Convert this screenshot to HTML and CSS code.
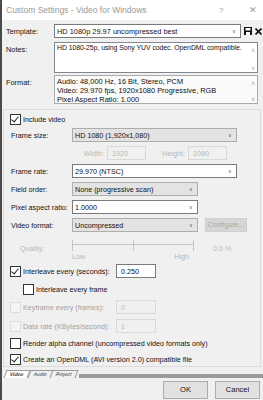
FILE: index.html
```html
<!DOCTYPE html>
<html lang="en">
<head>
  <meta charset="UTF-8" />
  <title>Custom Settings - Video for Windows</title>
  <link rel="stylesheet" href="styles.css">
</head>
<body>

<div class="window">
  <div class="titlebar">
    <span class="title">Custom Settings - Video for Windows</span>
    <span class="tb-help">?</span>
    <span class="tb-close">&#x2715;</span>
  </div>

  <div class="top">
    <div class="row row-template">
      <span class="lbl">Template:</span>
      <div class="combo white wide">
        <span>HD 1080p 29.97 uncompressed best</span>
        <span class="chev">&#x2228;</span>
      </div>
      <svg class="save" width="8" height="8" viewBox="0 0 8 8">
        <rect x="0" y="0" width="8" height="8" fill="#111"/>
        <rect x="1.5" y="1" width="5" height="2.5" fill="#fff"/>
        <rect x="2" y="5" width="4" height="3" fill="#fff"/>
      </svg>
      <svg class="del" width="7" height="7" viewBox="0 0 7 7">
        <path d="M0.5 0.5 L6.5 6.5 M6.5 0.5 L0.5 6.5" stroke="#111" stroke-width="1.6"/>
      </svg>
    </div>

    <div class="row row-notes">
      <span class="lbl">Notes:</span>
      <div class="memo notes">
        <span class="one">HD 1080-25p, using Sony YUV codec. OpenDML compatible.</span>
        <div class="scroll"><span>&#x2227;</span><span>&#x2228;</span></div>
      </div>
    </div>

    <div class="row row-format">
      <span class="lbl">Format:</span>
      <div class="memo format">
        <div class="lines">
          <span>Audio: 48,000 Hz, 16 Bit, Stereo, PCM</span>
          <span>Video: 29.970 fps, 1920x1080 Progressive, RGB</span>
          <span>Pixel Aspect Ratio: 1.000</span>
        </div>
        <div class="scroll"><span>&#x2227;</span><span>&#x2228;</span></div>
      </div>
    </div>
  </div>

  <div class="group">
    <label class="check-row first"><span class="box on"></span>Include video</label>

    <div class="frow">
      <span class="flbl">Frame size:</span>
      <div class="combo gray long"><span>HD 1080 (1,920x1,080)</span><span class="chev">&#x2228;</span></div>
    </div>

    <div class="frow dims">
      <span class="dim-lbl">Width:</span>
      <div class="edit off">1920</div>
      <span class="dim-lbl h">Height:</span>
      <div class="edit off">1080</div>
    </div>

    <div class="frow">
      <span class="flbl">Frame rate:</span>
      <div class="combo white long"><span>29.970 (NTSC)</span><span class="chev">&#x2228;</span></div>
    </div>

    <div class="frow">
      <span class="flbl">Field order:</span>
      <div class="combo gray short"><span>None (progressive scan)</span><span class="chev">&#x2228;</span></div>
    </div>

    <div class="frow">
      <span class="flbl">Pixel aspect ratio:</span>
      <div class="combo white short"><span>1.0000</span><span class="chev">&#x2228;</span></div>
    </div>

    <div class="frow">
      <span class="flbl">Video format:</span>
      <div class="combo gray short"><span>Uncompressed</span><span class="chev">&#x2228;</span></div>
      <div class="btn-config">Configure...</div>
    </div>

    <div class="quality">
      <span class="q-lbl">Quality:</span>
      <div class="slider">
        <div class="track"></div>
        <div class="ticks"><span></span><span></span><span></span></div>
        <div class="ends"><span>Low</span><span>High</span></div>
      </div>
      <span class="q-val">0.0 %</span>
    </div>

    <div class="frow il">
      <label class="check-row"><span class="box on"></span>Interleave every (seconds):</label>
      <div class="edit num">0.250</div>
    </div>

    <label class="check-row indent"><span class="box"></span>Interleave every frame</label>

    <div class="frow il dis">
      <label class="check-row"><span class="box off"></span>Keyframe every (frames):</label>
      <div class="edit num off">0</div>
    </div>

    <div class="frow il dis">
      <label class="check-row"><span class="box off"></span>Data rate (KBytes/second):</label>
      <div class="edit num off">1</div>
    </div>

    <label class="check-row alpha"><span class="box"></span>Render alpha channel (uncompressed video formats only)</label>
    <label class="check-row odml"><span class="box on"></span>Create an OpenDML (AVI version 2.0) compatible file</label>
  </div>

  <div class="tabs">
    <span class="tab active">Video</span>
    <span class="tab">Audio</span>
    <span class="tab">Project</span>
    <div class="tab-rest"></div>
  </div>

  <div class="buttons">
    <div class="btn">OK</div>
    <div class="btn">Cancel</div>
  </div>
</div>

</body>
</html>
```

FILE: styles.css
```css
html, body {
  overflow: hidden;
}
body {
  margin: 0;
  background: #fff;
  font-family: "Liberation Sans", Arial, sans-serif;
}
.window {
  width: 263px;
  height: 400px;
  background: #f0f0f0;
  border-left: 2px solid #4a4a4a;
  box-sizing: border-box;
  overflow: hidden;
  color: #111;
}
.titlebar {
  height: 20px;
  background: #fff;
  display: flex;
  align-items: center;
  font-size: 8.5px;
  color: #999;
  padding-left: 4px;
}
.title {
  flex: 1;
}
.tb-help {
  width: 30px;
  font-size: 8px;
}
.tb-close {
  width: 14px;
  font-size: 9px;
}

.top {
  padding: 4px 0 0 4px;
  font-size: 7.4px;
}
.row {
  display: flex;
}
.lbl {
  width: 48px;
  flex: none;
}
.row-template {
  align-items: center;
  height: 14px;
}
.row-notes {
  margin-top: 4px;
}
.row-notes .lbl,
.row-format .lbl {
  padding-top: 3px;
}
.row-format {
  margin-top: 2px;
}

.combo {
  display: flex;
  align-items: center;
  justify-content: space-between;
  height: 14px;
  box-sizing: border-box;
  padding: 0 4px 0 2px;
  border: 1px solid #aaa;
  white-space: nowrap;
}
.combo.white {
  background: #fff;
  border-color: #7a7a7a;
}
.combo.gray {
  background: #e3e3e3;
  border-color: #adadad;
}
.combo.wide {
  width: 187px;
  flex: none;
}
.chev {
  font-size: 5px;
  color: #555;
}
.save {
  margin-left: 3px;
  flex: none;
}
.del {
  margin-left: 3px;
  flex: none;
}

.memo {
  display: flex;
  justify-content: space-between;
  border: 1px solid #828790;
  box-sizing: border-box;
  width: 204px;
  padding: 1px 0 0 2px;
  white-space: nowrap;
  overflow: hidden;
}
.one {
  font-size: 6.9px;
  letter-spacing: -0.05px;
}
.notes {
  height: 31px;
  background: #fff;
}
.format {
  height: 29px;
  background: #fafafa;
  border-color: #aaa;
}
.lines {
  display: flex;
  flex-direction: column;
  line-height: 9px;
}
.scroll {
  width: 9px;
  flex: none;
  display: flex;
  flex-direction: column;
  justify-content: space-between;
  align-items: center;
  font-size: 6px;
  color: #aaa;
  padding: 2px 0 1px;
}

.group {
  margin: 5px 2px 0 1px;
  height: 258px;
  border: 1px solid #dcdcdc;
  box-sizing: border-box;
  font-size: 7.2px;
  color: #111;
  padding: 4px 0 0 6px;
}
.check-row {
  display: flex;
  align-items: center;
  height: 11px;
  white-space: nowrap;
}
.box {
  width: 9px;
  height: 9px;
  border: 1px solid #333;
  background: #fff;
  margin-right: 2px;
  flex: none;
  position: relative;
}
.box.on::after {
  content: "";
  position: absolute;
  left: 2px;
  top: 0px;
  width: 3px;
  height: 6px;
  border: solid #222;
  border-width: 0 1.3px 1.3px 0;
  transform: rotate(40deg);
}
.box.off {
  border-color: #ddd;
  background: #f4f4f4;
}
.frow {
  display: flex;
  align-items: center;
  margin-top: 4px;
  height: 14px;
}
.first + .frow {
  margin-top: 3px;
}
.flbl {
  width: 61px;
  flex: none;
  padding-left: 1px;
}
.combo.long {
  width: 165px;
}
.combo.short {
  width: 126px;
}
.dims {
  margin-top: 4px;
  padding-left: 63px;
  color: #b8b8b8;
}
.dim-lbl {
  width: 31px;
  text-align: right;
  padding-right: 3px;
}
.dim-lbl.h {
  width: 39px;
}
.edit {
  height: 14px;
  width: 39px;
  box-sizing: border-box;
  border: 1px solid #7a7a7a;
  background: #fff;
  padding: 2px 0 0 4px;
}
.edit.off {
  border-color: #d9d9d9;
  background: #f0f0f0;
  color: #b8b8b8;
}
.btn-config {
  margin-left: 7px;
  width: 42px;
  height: 14px;
  box-sizing: border-box;
  border: 1px solid #cfcfcf;
  background: #d6d6d6;
  color: #a8a8a8;
  text-align: center;
  line-height: 12px;
}

.quality {
  display: flex;
  color: #b8b8b8;
  margin-top: 7px;
  height: 21px;
}
.q-lbl {
  width: 62px;
  padding: 5px 0 0 10px;
  box-sizing: border-box;
}
.slider {
  width: 122px;
  position: relative;
}
.track {
  margin-top: 5px;
  height: 1px;
  background: #c4c4c4;
}
.ticks {
  display: flex;
  justify-content: space-between;
  margin-top: -5px;
}
.ticks span {
  width: 1px;
  height: 11px;
  background: #c4c4c4;
}
.ends {
  display: flex;
  justify-content: space-between;
  padding-right: 5px;
  margin-top: 1px;
}
.q-val {
  margin-left: 19px;
  padding-top: 5px;
}

.il .check-row {
  width: 106px;
}
.num {
  width: 40px;
}
.dis {
  color: #a0a0a0;
  margin-top: 5px;
}
.indent {
  padding-left: 13px;
  margin-top: 6px;
}
.alpha {
  margin-top: 5px;
}
.odml {
  margin-top: 5px;
}

.tabs {
  display: flex;
  align-items: flex-end;
  height: 9px;
  margin-top: 2px;
  padding-left: 3px;
  font-size: 5px;
}
.tab {
  padding: 0 4px;
  height: 7px;
  line-height: 7px;
  border: 1px solid #999;
  border-bottom: none;
  transform: skewX(-20deg);
  background: #f0f0f0;
  color: #333;
}
.tab.active {
  font-weight: bold;
  background: #fff;
}
.tab-rest {
  flex: 1;
  height: 4px;
  background: #9a9a9a;
  margin-left: 2px;
}

.buttons {
  display: flex;
  justify-content: flex-end;
  gap: 7px;
  padding: 3px 3px 0 0;
}
.btn {
  width: 45px;
  height: 18px;
  box-sizing: border-box;
  border: 1px solid #adadad;
  background: #e1e1e1;
  font-size: 7.5px;
  text-align: center;
  line-height: 16px;
}
```
